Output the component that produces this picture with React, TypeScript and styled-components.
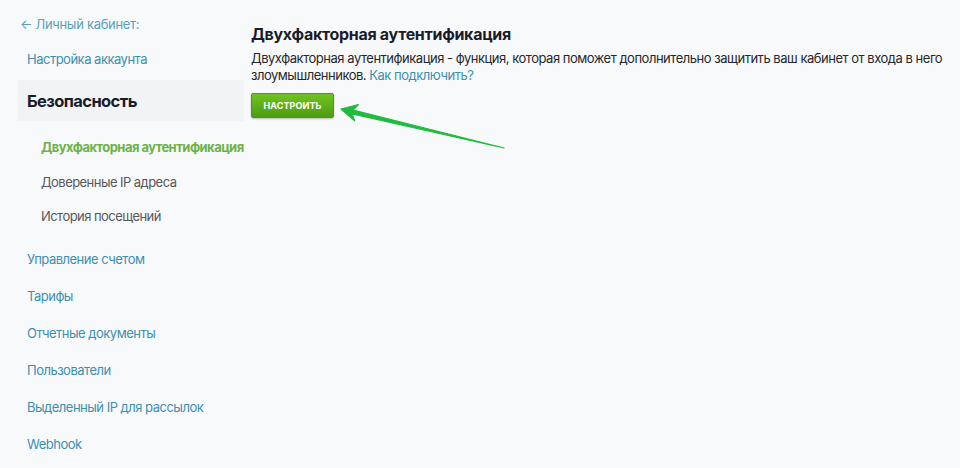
import React from 'react';
import styled, { createGlobalStyle } from 'styled-components';

const GlobalStyle = createGlobalStyle`
  html, body {
    margin: 0;
    padding: 0;
    background: #f8f9fb;
  }
  body {
    font-family: Inter, "Noto Sans", sans-serif;
    -webkit-font-smoothing: antialiased;
  }
`;

const Page = styled.div`
  position: relative;
  display: flex;
  gap: 7px;
  width: 960px;
  height: 468px;
  padding-left: 18px;
  box-sizing: border-box;
  overflow: hidden;
`;

const Sidebar = styled.nav`
  width: 226px;
  flex-shrink: 0;
  padding-top: 16px;
  display: flex;
  flex-direction: column;
`;

const BackLink = styled.a`
  font-size: 13px;
  line-height: 16px;
  letter-spacing: -0.3px;
  color: #5a9fb9;
  padding-left: 2px;
  margin-bottom: 19px;
  cursor: pointer;
`;

const NavLink = styled.a`
  display: block;
  font-size: 13px;
  line-height: 16px;
  letter-spacing: -0.5px;
  color: #3d8fb0;
  padding-left: 9px;
  cursor: pointer;
`;

const Section = styled.div`
  background: #f2f3f4;
  height: 41px;
  display: flex;
  align-items: center;
  padding-left: 9px;
  font-size: 16.5px;
  letter-spacing: -0.6px;
  font-weight: 700;
  color: #1b1c2a;
  margin-top: 13px;
  margin-bottom: 18px;
`;

const SubList = styled.div`
  display: flex;
  flex-direction: column;
  gap: 18.5px;
  padding-left: 23px;
  margin-bottom: 27px;
`;

const SubItem = styled.a<{ $active?: boolean }>`
  font-size: 13px;
  line-height: 16px;
  letter-spacing: -0.55px;
  white-space: nowrap;
  font-weight: ${p => (p.$active ? 700 : 400)};
  color: ${p => (p.$active ? '#6cb24a' : '#56585c')};
  cursor: pointer;
`;

const MainList = styled.div`
  display: flex;
  flex-direction: column;
  gap: 21px;
`;

const Main = styled.main`
  flex: 1;
  padding-top: 24px;
  padding-right: 8px;
`;

const Title = styled.h1`
  margin: 0 0 6px;
  font-size: 16px;
  line-height: 20px;
  letter-spacing: -0.3px;
  font-weight: 700;
  color: #1b1c2a;
`;

const Text = styled.p`
  margin: 0 0 8px;
  font-size: 13px;
  line-height: 17px;
  letter-spacing: -0.48px;
  color: #26272b;
  max-width: 700px;
`;

const HelpLink = styled.a`
  color: #3d8fb0;
  cursor: pointer;
`;

const Button = styled.button`
  width: 83px;
  height: 25px;
  margin-top: 1px;
  border: 1px solid #4c9a14;
  border-radius: 2px;
  background: linear-gradient(#70c322, #4d9c12);
  box-shadow: 0 1px 2px rgba(0, 0, 0, 0.25);
  color: #fff;
  font-family: Inter, "Noto Sans", sans-serif;
  font-size: 9px;
  font-weight: 700;
  letter-spacing: 0.1px;
  padding: 0;
  cursor: pointer;
`;

const Overlay = styled.svg`
  position: absolute;
  left: 0;
  top: 0;
  pointer-events: none;
`;

const mainItems = [
  'Управление счетом',
  'Тарифы',
  'Отчетные документы',
  'Пользователи',
  'Выделенный IP для рассылок',
  'Webhook',
];

export default function App() {
  return (
    <>
      <GlobalStyle />
      <Page>
        <Sidebar>
          <BackLink>← Личный кабинет:</BackLink>
          <NavLink>Настройка аккаунта</NavLink>
          <Section>Безопасность</Section>
          <SubList>
            <SubItem $active>Двухфакторная аутентификация</SubItem>
            <SubItem>Доверенные IP адреса</SubItem>
            <SubItem>История посещений</SubItem>
          </SubList>
          <MainList>
            {mainItems.map(item => (
              <NavLink key={item}>{item}</NavLink>
            ))}
          </MainList>
        </Sidebar>
        <Main>
          <Title>Двухфакторная аутентификация</Title>
          <Text>
            Двухфакторная аутентификация - функция, которая поможет дополнительно защитить ваш кабинет от входа в него
            злоумышленников. <HelpLink>Как подключить?</HelpLink>
          </Text>
          <Button>НАСТРОИТЬ</Button>
        </Main>
        <Overlay width="960" height="468" viewBox="0 0 960 468">
          <polygon
            points="341,109 358.4,104.5 353.1,110 504,148 352.1,113.8 354.6,120.8"
            fill="#1fbb3e"
            stroke="#1fbb3e"
            strokeWidth="1.2"
            strokeLinejoin="round"
          />
        </Overlay>
      </Page>
    </>
  );
}
